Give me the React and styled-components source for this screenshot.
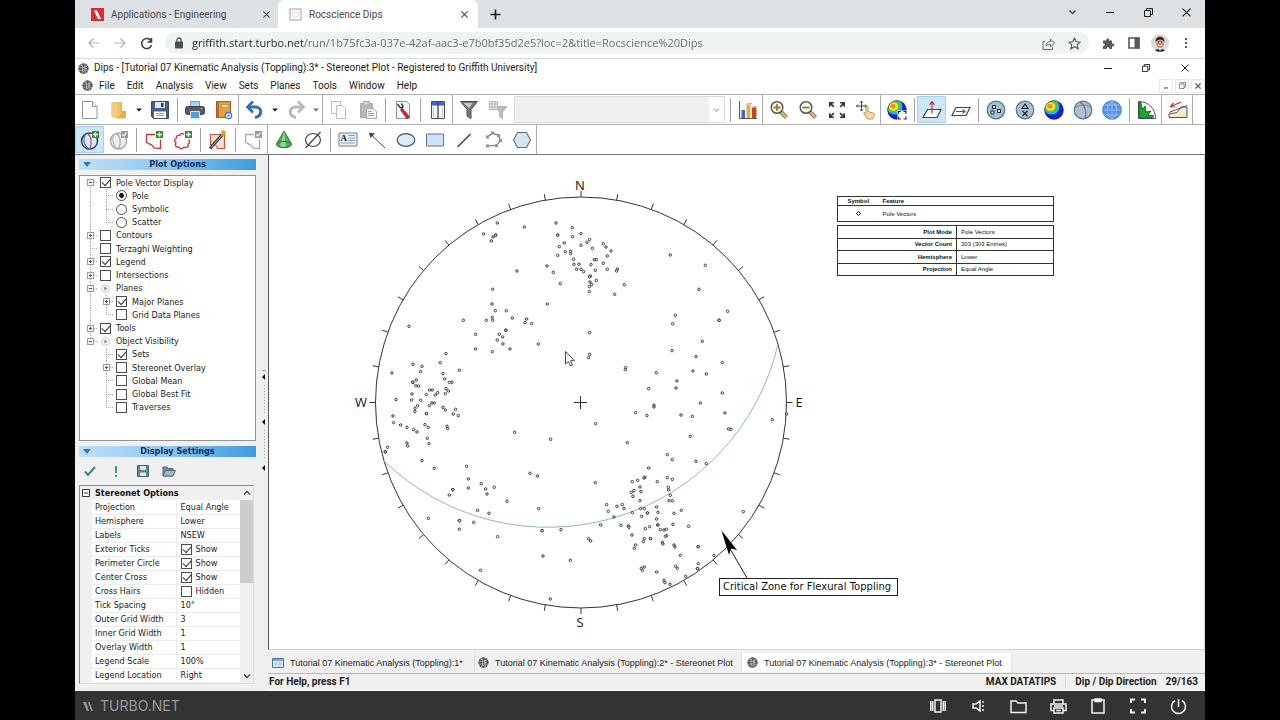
import React from "react";
import styled, { createGlobalStyle, css } from "styled-components";

const ui = 'Roboto, "Noto Sans", sans-serif';
const humanist = '"Open Sans", "Noto Sans", sans-serif';
const classic = '"DejaVu Sans Condensed", "DejaVu Sans", sans-serif';
const arial = '"Liberation Sans", Arial, sans-serif';

const GlobalStyle = createGlobalStyle`
  * { box-sizing: border-box; }
  html, body, #root { height: 100%; }
  body { margin: 0; background: #000; font-family: ${ui}; color: #1c1c1c; }
  button { border: 0; padding: 0; background: none; font: inherit; color: inherit; }
  svg { display: block; flex: none; }
`;

/* ---------- shell ---------- */

const Desktop = styled.div`
  min-height: 100vh;
  padding: 0 75px;
  background: #000;
  display: flex;
`;
const Screen = styled.div`
  flex: 1;
  min-width: 0;
  background: #fff;
  display: flex;
  flex-direction: column;
`;

/* ---------- browser ---------- */

const TabStrip = styled.div`
  height: 28px;
  background: #dde1e4;
  display: flex;
  align-items: stretch;
`;
const BrowserTab = styled.div`
  width: ${(p) => (p.$active ? 200 : 203)}px;
  padding: 0 8px 0 ${(p) => (p.$active ? 11 : 16)}px;
  display: flex;
  align-items: center;
  gap: 7px;
  border-radius: 6px 6px 0 0;
  background: ${(p) => (p.$active ? "#fff" : "transparent")};
  font-size: 10px;
  color: #45494d;
`;
const TabTitle = styled.span`
  flex: 1;
  white-space: nowrap;
`;
const GlyphButton = styled.button`
  width: ${(p) => p.$w || 14}px;
  height: ${(p) => p.$h || 20}px;
  display: flex;
  align-items: center;
  justify-content: center;
`;
const WindowControls = styled.div`
  margin-left: auto;
  padding-bottom: ${(p) => p.$lift || 0}px;
  display: flex;
  align-items: center;
`;
const AddressRow = styled.div`
  height: 31px;
  padding: 0 6px;
  border-bottom: 1px solid #d9dcdc;
  display: flex;
  align-items: center;
`;
const Omnibox = styled.label`
  flex: 1;
  height: 22px;
  margin: 0 6px;
  padding: 0 2px 0 9px;
  border-radius: 11px;
  background: #eff3f2;
  display: flex;
  align-items: center;
  gap: 8px;
`;
const UrlInput = styled.input`
  flex: 1;
  min-width: 0;
  border: 0;
  padding: 0;
  outline: 0;
  font-family: ${humanist};
  font-size: 11px;
  line-height: 20px;
  color: transparent;
  background: linear-gradient(to right, #202326 112px, #62676a 112px);
  background-clip: text;
  -webkit-background-clip: text;
`;
const Avatar = styled.button`
  width: 18px;
  height: 18px;
  margin: 0 4px;
  border-radius: 9px;
  overflow: hidden;
`;

/* ---------- application chrome ---------- */

const TitleBar = styled.header`
  height: 18px;
  padding-left: 3px;
  display: flex;
  align-items: center;
  gap: 5px;
`;
const AppTitle = styled.h1`
  margin: 0;
  font-size: 10px;
  line-height: 14px;
  font-weight: 400;
  white-space: nowrap;
`;
const MenuBar = styled.nav`
  height: 17px;
  padding-left: 7px;
  display: flex;
  align-items: center;
`;
const MenuItem = styled.button`
  padding: 0 6px;
  font-size: 10px;
  line-height: 16px;
`;
const MdiButton = styled.button`
  width: 14px;
  height: 14px;
  margin-left: 2px;
  border: 1px solid #e8e8e8;
  display: flex;
  align-items: center;
  justify-content: center;
  color: #666;
`;
const ToolRow = styled.div`
  height: 30px;
  border-top: 1px solid #b4b0b4;
  display: flex;
`;
const Band = styled.div`
  display: flex;
  align-items: center;
  & + & {
    padding-left: 1px;
    border-left: 1px solid #b0aab0;
  }
  &:last-child {
    border-right: 1px solid #b0aab0;
  }
`;
const ToolButton = styled.button`
  width: 29px;
  height: 27px;
  display: flex;
  align-items: center;
  justify-content: center;
  background: ${(p) => (p.$on ? "#cce6fb" : "none")};
  box-shadow: ${(p) => (p.$on ? "inset 0 0 0 1px #a6d2f5" : "none")};
`;
const CaretButton = styled.button`
  width: 12px;
  height: 27px;
  display: flex;
  align-items: center;
  justify-content: center;
  color: ${(p) => (p.$dim ? "#666" : "#111")};
`;
const Divider = styled.span`
  width: 6px;
  height: 24px;
  background: linear-gradient(#a5a0a5, #a5a0a5) 3px 0 / 1px 100% no-repeat;
`;
const ComboBox = styled.label`
  width: 211px;
  height: 27px;
  margin: 0 2px;
  border: 1px solid #dcdcdc;
  background: #f0f0f0;
  display: flex;
  align-items: center;
`;
const ComboSelect = styled.select`
  flex: 1;
  height: 25px;
  border: 0;
  appearance: none;
  background: none;
`;
const ComboArrow = styled.span`
  width: 15px;
  height: 25px;
  background: #fff;
  display: flex;
  align-items: center;
  justify-content: center;
`;

/* ---------- work area ---------- */

const WorkArea = styled.div`
  flex: 1;
  display: flex;
  border-top: 1px solid #77767a;
  background: #f0f0f0;
`;
const SideBar = styled.aside`
  width: 181px;
  padding: 4px 0 7px 4px;
  display: flex;
  flex-direction: column;
  font-family: ${classic};
  font-size: 9px;
`;
const PanelTitle = styled.h2`
  height: 11px;
  margin: 0;
  padding-left: 4px;
  background: linear-gradient(to right, #bfe0fa, #8cc6f3 50%, #3d9be0);
  display: flex;
  align-items: center;
  gap: 8px;
  font-size: 9px;
  line-height: 11px;
  color: #12305c;
  span {
    flex: 1;
    text-align: center;
  }
`;
const TreeBox = styled.div`
  height: 266px;
  margin: 5px 0;
  padding-left: 2px;
  border: 1px solid #92949a;
  background: #fff;
`;
const TreeList = styled.ul`
  height: 238px;
  margin: 0;
  padding: 0;
  list-style: none;
  display: grid;
  grid-auto-rows: 1fr;
`;
const TreeItem = styled.li`
  display: flex;
  align-items: stretch;
  label,
  > span:last-child {
    display: flex;
    align-items: center;
    white-space: nowrap;
  }
`;
const dots = "#a8a8a8 0 1px, transparent 1px 2px";
const verticals = { all: "0 / 1px 100%", top: "0 / 1px 50%", bottom: "100% / 1px 50%" };
const Guide = styled.span`
  width: 16px;
  display: flex;
  align-items: center;
  justify-content: center;
  background-repeat: no-repeat;
  ${(p) =>
    p.$v &&
    css`
      background: ${p.$stub ? `repeating-linear-gradient(to right, ${dots}) 8px 50% / 8px 1px no-repeat,` : ""}
        repeating-linear-gradient(to bottom, ${dots}) 8px ${verticals[p.$v]} no-repeat;
    `}
`;
const Expander = styled.button`
  width: 7px;
  height: 7px;
  border: 1px solid #989ca4;
  background: ${(p) =>
    p.$open
      ? "linear-gradient(#555, #555) 1px 2px / 3px 1px no-repeat, #f4f4f4"
      : "linear-gradient(#556, #556) 1px 2px / 3px 1px no-repeat, linear-gradient(#556, #556) 2px 1px / 1px 3px no-repeat, #f4f4f4"};
`;
const ControlCell = styled.span`
  width: 18px;
  display: flex;
  align-items: center;
  padding-left: ${(p) => (p.$bullet ? 3 : 2)}px;
`;
const CheckBox = styled.input`
  appearance: none;
  flex: none;
  width: 11px;
  height: 11px;
  margin: 0;
  border: 1px solid #4c4c4c;
  background: #fff;
  &:checked::after {
    content: "";
    display: block;
    width: 7px;
    height: 4px;
    margin: 1px;
    border: solid #333;
    border-width: 0 0 1px 1px;
    transform: rotate(-48deg);
  }
`;
const Radio = styled(CheckBox)`
  border-radius: 50%;
  &:checked::after {
    width: 5px;
    height: 5px;
    margin: 2px;
    border: 0;
    border-radius: 50%;
    background: #111;
  }
`;
const SettingsTools = styled.div`
  height: 28px;
  padding-left: 1px;
  display: flex;
  align-items: center;
  gap: 6px;
`;
const SettingsBox = styled.div`
  flex: 1;
  width: 175px;
  border: 1px solid #8c8c8c;
  border-right-color: #ddd;
  border-bottom-color: #ddd;
  display: flex;
  background: #f0f0f0;
`;
const SettingsGrid = styled.div`
  flex: 1;
`;
const SettingsHeading = styled.h3`
  height: 14px;
  margin: 0;
  padding-left: 2px;
  display: flex;
  align-items: center;
  gap: 5px;
  font-size: 9px;
  color: #111;
`;
const SettingsTable = styled.table`
  width: 148px;
  margin-left: 12px;
  border-collapse: collapse;
  table-layout: fixed;
  background: #fff;
  th,
  td {
    height: 14px;
    padding: 0 0 0 3px;
    border-bottom: 1px solid #ececec;
    text-align: left;
    font-weight: 400;
    line-height: 12px;
    white-space: nowrap;
  }
  th {
    width: 84px;
    border-right: 1px solid #ececec;
  }
  td {
    padding-left: 4px;
  }
  label {
    display: flex;
    align-items: center;
    gap: 4px;
  }
`;
const ScrollBar = styled.div`
  width: 13px;
  display: flex;
  flex-direction: column;
`;
const ScrollButton = styled.button`
  height: 14px;
  display: flex;
  align-items: center;
  justify-content: center;
`;
const ScrollThumb = styled.div`
  height: 83px;
  background: #cdcdcd;
`;
const Spring = styled.div`
  flex: 1;
`;
const Splitter = styled.div`
  width: 12px;
  padding: 215px 2px 0 6px;
  display: flex;
  flex-direction: column;
`;
const Grip = styled.div`
  height: ${(p) => p.$h}px;
  padding-top: 3px;
  border-top: ${(p) => (p.$edge ? "1px solid #999" : "0")};
  background: repeating-linear-gradient(#999 0 1px, transparent 1px 3px) 2px 14px / 1px 28px no-repeat;
`;
const DocumentArea = styled.main`
  flex: 1;
  min-width: 0;
  display: flex;
  flex-direction: column;
`;
const PlotCanvas = styled.section`
  flex: 1;
  padding-top: 1px;
  border-left: 1px solid #55555a;
  border-right: 1px solid #d0d0d0;
  border-bottom: 1px solid #d4d4d4;
  background: #fff;
  display: flex;
  align-items: flex-start;
`;
const PlotSvg = styled.svg`
  overflow: visible;
  font-family: ${humanist};
`;
const LegendColumn = styled.div`
  width: 217px;
  margin: 40px 0 0 8px;
  display: flex;
  flex-direction: column;
  gap: 3px;
`;
const LegendTable = styled.table`
  width: 100%;
  height: ${(p) => p.$h}px;
  border: 1px solid #333;
  border-collapse: collapse;
  table-layout: fixed;
  font-family: ${arial};
  font-size: 6px;
  line-height: 8px;
  color: #111;
  tr {
    border-bottom: 1px solid #333;
  }
  th,
  td {
    padding: 0 4px;
    text-align: left;
    white-space: nowrap;
  }
`;
const SymbolCell = styled.td`
  width: 41px;
  && {
    text-align: center;
  }
  svg {
    margin: 0 auto;
  }
`;
const KeyCell = styled.th`
  width: 119px;
  border-right: 1px solid #333;
  && {
    text-align: right;
  }
`;
const DocTabs = styled.div`
  height: 24px;
  padding-top: 3px;
  border-bottom: 1px solid #b8b8b8;
  display: flex;
`;
const DocTab = styled.button`
  height: 19px;
  width: ${(p) => p.$w}px;
  padding-left: ${(p) => p.$pad}px;
  border-right: 1px solid #dedede;
  background: ${(p) => (p.$active ? "#fff" : "transparent")};
  display: flex;
  align-items: center;
  gap: 6px;
  font-family: ${arial};
  font-size: 9px;
  white-space: nowrap;
`;
const StatusBar = styled.footer`
  height: 17px;
  padding: 0 7px 0 1px;
  border-bottom: 1px solid #fff;
  display: flex;
  align-items: center;
  gap: 9px;
  font-size: 10px;
  font-weight: 700;
  line-height: 14px;
  white-space: nowrap;
`;
const StatusRule = styled.i`
  width: 1px;
  height: 12px;
  background: #dcdcdc;
`;
const TaskBar = styled.div`
  height: 30px;
  padding: 0 7px;
  background: #333;
  display: flex;
  align-items: center;
  color: #9a9a9a;
`;
const Brand = styled.span`
  flex: 1;
  display: flex;
  align-items: center;
  gap: 6px;
  font-family: Inter, sans-serif;
  font-size: 14px;
  line-height: 20px;
`;
const TaskButton = styled.button`
  width: 40px;
  height: 30px;
  display: flex;
  align-items: center;
  justify-content: center;
  color: #f2f2f2;
`;

/* ---------- icons ---------- */

const Svg = ({ w = 20, h = w, vb, sw = 1, children, ...rest }) => (
  <svg width={w} height={h} viewBox={vb || `0 0 ${w} ${h}`} fill="none" stroke="currentColor" strokeWidth={sw} aria-hidden="true" {...rest}>
    {children}
  </svg>
);

const Close = ({ s = 7, sw = 1.2 }) => (
  <Svg w={s} vb="0 0 8 8" sw={sw}><path d="M.5.5l7 7M7.5.5l-7 7" /></Svg>
);
const Minimise = () => <Svg w={8} sw={1}><path d="M0 4.5h8" /></Svg>;
const Restore = ({ s = 9 }) => (
  <Svg w={s} vb="0 0 9 9"><path d="M.5 2.5h6v6h-6zM2.5 2.500v-2h6v6h-2" /></Svg>
);
const Caret = () => <Svg w={6} h={4}><path d="M.3.5h5.400L3 3.500z" fill="currentColor" stroke="none" /></Svg>;
const Chevron = ({ up, c = "#444", w = 8 }) => (
  <Svg w={w} h={6} vb="0 0 8 6" color={c} sw={1.3}><path d={up ? "M1 4.500l3-3 3 3" : "M1 1.500l3 3 3-3"} /></Svg>
);
const Globe = () => (
  <Svg w={11} vb="0 0 12 12">
    <circle cx="6" cy="6" r="5.600" fill="#4a4c4e" stroke="none" />
    <path d="M1 4.500l4 .5 5.500-2M1 8l4-.6 6 .6M4 1c1.500 3 1.500 7 0 10M8 1c-1 3-1 7 .5 10" stroke="#c9cccc" strokeWidth=".8" />
    <path d="M2.500 2l2 1M7 5.500l2.500.5M5 9l2 1" stroke="#eee" strokeWidth=".8" />
  </Svg>
);

const NewDoc = () => (
  <Svg w={20}><path d="M2.500 1.500h10l4.500 5V18.500H2.500z" fill="#fff" stroke="#8b97a3" /><path d="M12.500 1.500v5H17" stroke="#8b97a3" fill="#e8eef4" /></Svg>
);
const OpenDoc = () => (
  <Svg w={20}><path d="M8 2h5v9h3.500v7H7z" fill="#e3b14e" stroke="none" /><path d="M2.500 2H12v13l-4 3.500-5.500-2z" fill="#eec468" stroke="none" /><path d="M2.500 2L8 4.500v14l-5.500-2z" fill="#f1cd7d" stroke="none" /><path d="M12 11.500h4.500v6.500H8" stroke="#d9a84a" strokeWidth=".8" /></Svg>
);
const Save = () => (
  <Svg w={20}><path d="M1.500 1.500h17v17h-15l-2-2z" fill="#456187" stroke="#3a4a66" /><path d="M5 2h10v6H5z" fill="#dfe8f2" stroke="none" /><path d="M11 3h2.500v4H11z" fill="#2a3a55" stroke="none" /><path d="M4 11.500h12V18H4z" fill="#fff" stroke="none" /><path d="M6 13.500h8M6 15.500h8" stroke="#8d9bb0" /></Svg>
);
const Print = () => (
  <Svg w={20}><path d="M5.500 1.500h9V7h-9z" fill="#a9d4f2" stroke="#69a5d0" /><rect x=".5" y="6.500" width="19" height="8" rx="2" fill="#565b61" stroke="#3f4347" /><path d="M5.500 11.500h9v7h-9z" fill="#4fa0dc" stroke="#cfe6f7" /><circle cx="16.500" cy="8.800" r=".8" fill="#6f6" stroke="none" /></Svg>
);
const Book = () => (
  <Svg w={20}><path d="M2.500 1.500h14v16h-14z" fill="#e0a046" stroke="#9b6322" /><path d="M3 2h2v15H3z" fill="#b87426" stroke="none" /><path d="M7.500 4.500h7v3h-7z" fill="#f6dca8" stroke="#b87426" strokeWidth=".6" /><circle cx="14.500" cy="15.500" r="3.200" fill="#dde9fa" stroke="#3f70c0" strokeWidth="1.200" /><circle cx="14.500" cy="15.500" r="1" fill="#3f70c0" stroke="none" /></Svg>
);
const Undo = ({ c = "#2f6fb5", flip }) => (
  <Svg w={20}><g transform={flip ? "matrix(-1 0 0 1 20 0)" : undefined}><path d="M8 1.500L2.500 7 8 12.500" stroke={c} strokeWidth="2.600" /><path d="M3.500 7H11c6.500.5 6.500 9-1 10.500" stroke={c} strokeWidth="3" /></g></Svg>
);
const Copy = () => (
  <Svg w={20} color="#b9bcc0"><path d="M2.500 1.500h9v12h-9z" fill="#fff" /><path d="M7.500 5.500h6l3 3v10h-9z" fill="#fff" /></Svg>
);
const Paste = () => (
  <Svg w={20} color="#a9a9a9"><path d="M2.500 3.500h12v14h-12z" fill="#b9b9b9" /><path d="M5.500 1.500h6v3.500h-6z" fill="#d7d7d7" /><path d="M8.500 8.500h7l3 3v7h-10z" fill="#f1f1f1" /><path d="M10 11.500h4M10 13.500h6M10 15.500h6" /></Svg>
);
const DocPen = () => (
  <Svg w={20}><path d="M3.500 1.500h10l3 3v14h-13z" fill="#f5f9fc" stroke="#8799a8" /><path d="M9 8l7.500 8.500-2.500 2.500-6.500-9z" fill="#c22b2b" stroke="#8d1d1d" strokeWidth=".6" /><path d="M4.500 4l2.500 3.500 2 .5 1-1.500-1.500-3" stroke="#333" strokeWidth="1.400" /></Svg>
);
const Columns = () => (
  <Svg w={20}><path d="M3.500 1.500h13v17h-13z" fill="#f3f5f8" stroke="#4b4f58" /><path d="M4 2h12v3.500H4z" fill="#3c63cc" stroke="none" /><path d="M10 2v16.500" stroke="#4b4f58" strokeWidth="1.400" /><path d="M5.500 7v10M14.500 7v10" stroke="#c7ccd6" /></Svg>
);
const Filter = () => (
  <Svg w={20}><path d="M1.500 1.500h17l-6.500 8v9l-4-2.500V9.500z" fill="#777" stroke="#4c4c4c" /><path d="M4.500 3h9L10 8z" fill="#c8c8c8" stroke="none" /></Svg>
);
const FilterGrid = () => (
  <Svg w={20} color="#b4b4b4"><path d="M7 6.500h12l-4.500 5.500v6.500l-3-2V12z" fill="#bdbdbd" /><path d="M1.500 1.500h8v8h-8z" fill="#f2f2f2" /><path d="M4 1.500v8M7 1.500v8M1.500 4h8M1.500 7h8" /></Svg>
);
const BarChart = () => (
  <Svg w={20}><path d="M1.500 1v17.500H19" stroke="#555" /><path d="M3.500 10h3.500v8H3.500z" fill="#3d65c8" stroke="none" /><path d="M8.500 4.500h4v13.500h-4z" fill="#e9a94c" stroke="none" /><path d="M14 7.500h4V18h-4z" fill="#c8402c" stroke="none" /><path d="M8.500 4.500l1-1h4l-1 1M14 7.500l1-1h3.500v10" stroke="#a9863a" strokeWidth=".6" /></Svg>
);
const Magnifier = ({ plus }) => (
  <Svg w={20}><path d="M12 12l5.500 5.500" stroke="#8d7438" strokeWidth="4" /><path d="M12 12l5.500 5.500" stroke="#d9bd74" strokeWidth="2.200" /><circle cx="8" cy="7.500" r="5.800" fill="#f7f7f2" stroke="#565a60" strokeWidth="1.500" /><path d={plus ? "M4.500 7.500h7M8 4v7" : "M4.500 7.500h7"} stroke="#a07820" strokeWidth="1.800" /></Svg>
);
const Expand = () => (
  <Svg w={18} vb="0 0 20 20" color="#333" sw={1.8}><path d="M2 6.500V2h4.500M2.500 2.500l4 4M18 6.500V2h-4.500M17.500 2.500l-4 4M2 13.500V18h4.500M2.500 17.500l4-4M18 13.500V18h-4.500M17.500 17.500l-4-4" /></Svg>
);
const Pan = () => (
  <Svg w={20}><path d="M5.500 1v10M.5 6h10M4 2.500L5.500 1 7 2.500M4 9.500L5.500 11 7 9.500M2 4.500L.5 6 2 7.500M9 4.500L10.500 6 9 7.500" stroke="#444" /><path d="M10 7.500c0-1.500 2-1.500 2 0v4l5 1.500c1.500.5 1.500 2 1 3.500l-1.500 2.500h-5L8 14c-1-1.500.5-2 1.500-1l.5.5z" fill="#f6dba8" stroke="#a8803c" strokeWidth=".8" /></Svg>
);
const RainbowBall = ({ tool }) => (
  <Svg w={20}>
    <circle cx="10" cy="10" r="9.500" fill="#1420d8" stroke="none" />
    <path d="M2.500 4A9.500 9.500 0 0 1 14 1.500c3 5 1 12-5 13C5 15 2 13 .8 11 .3 8.500 1 6 2.500 4z" fill="#28b6d4" stroke="none" />
    <path d="M3.500 3A9.500 9.500 0 0 1 12.500 1c2 4.500.5 10-4.500 11-3 .5-6-.5-7.400-2.500A9 9 0 0 1 3.500 3z" fill="#59c838" stroke="none" />
    <ellipse cx="6.500" cy="6.500" rx="4.800" ry="4.300" fill="#f3ea2e" stroke="none" />
    <ellipse cx="6" cy="6.300" rx="2.500" ry="2.200" fill="#f08a24" stroke="none" />
    <circle cx="10" cy="10" r="9.300" stroke="#10186a" strokeWidth=".5" />
    {tool && <g><path d="M10.500 10.500h9.500v9.500h-9.500z" fill="#fff" stroke="none" /><path d="M11.500 14v-2.500h2.500M19 14v-2.500h-2.500M11.500 16.500V19h2.500M19 16.500V19h-2.500" stroke="#333" strokeWidth="1.200" /></g>}
  </Svg>
);
const PlaneUp = () => (
  <Svg w={20}><path d="M5.500 9.500h13.500l-4 8H1z" fill="#fff" stroke="#444" strokeWidth="1.200" /><path d="M10 13.500V2M7.500 5L10 1.500 12.500 5" stroke="#c03030" strokeWidth="1.200" /></Svg>
);
const PlaneFlat = () => (
  <Svg w={20}><path d="M5 7.500h14l-4 8H1z" fill="#fff" stroke="#444" strokeWidth="1.200" /><path d="M5 11.500h9M11.500 9.500l2.500 2-2.500 2" stroke="#c03030" strokeWidth="1.200" /></Svg>
);
const Disc = ({ children, fill = "#9fc3d2" }) => (
  <Svg w={20}><circle cx="10" cy="10" r="8.800" fill={fill} stroke="#5c7480" strokeWidth="1.200" />{children}</Svg>
);
const PolesDisc = () => <Disc><path d="M6.500 5.500h3v3h-3zM5 11h3v3H5zM11.500 9.500h3v3h-3z" fill="#dfeef4" stroke="#222" /></Disc>;
const SymbolDisc = () => <Disc><path d="M7 8.500L10 4l3 4.500zM7.500 11l5 5M12.500 11l-5 5" stroke="#222" strokeWidth="1.200" /></Disc>;
const PlaneDisc = () => <Disc fill="#a9c3d4"><path d="M7 2c5 3 7 10 5 16.500" stroke="#b65a6a" strokeWidth="1.200" /><path d="M2 8c5-4 12-4 16 0" stroke="#6d8796" /></Disc>;
const GridDisc = () => <Svg w={20}><circle cx="10" cy="10" r="9.300" fill="#5a8fe0" stroke="#3f6fc4" /><path d="M10 .5v19M.5 10h19M2.500 5h15M2.500 15h15M10 .5c-6 5-6 14 0 19M10 .5c6 5 6 14 0 19" stroke="#a9c8f5" strokeWidth=".8" /></Svg>;
const Rosette = () => (
  <Svg w={20}><path d="M1.500 1.500c10 0 17 7 17 17h-17z" fill="#fff" stroke="#555" /><path d="M2 18V2l2 .5 1.500 7L8 6l1 6 5-1-3 4 5.500.5-1 2.500z" fill="#1ba634" stroke="#0c5c1b" strokeWidth=".8" /></Svg>
);
const Slope = () => (
  <Svg w={20}><path d="M1 17.500V14l8-1.500 4-5.500h6v10.500z" fill="#fbe8c4" stroke="#555" /><path d="M1 12.500L19 5.500" stroke="#555" /><path d="M3 6.500L13 2M5.500 3L2.500 6.500l4.500.5" stroke="#c03030" strokeWidth="1.200" /></Svg>
);

const PlusBadge = () => <g><path d="M12 1h7v7h-7z" fill="#2f8f2a" stroke="none" /><path d="M15.500 2.200v4.600M13.200 4.500h4.600" stroke="#fff" strokeWidth="1.400" /></g>;
const CheckBadge = () => <g><path d="M12 1h7v7h-7z" fill="#9b9b9b" stroke="none" /><path d="M13.500 4.500l1.500 1.500 2.500-3.500" stroke="#fff" strokeWidth="1.200" /></g>;
const PlaneSphere = ({ dim }) => (
  <Svg w={20}><circle cx="9.500" cy="11" r="8" fill={dim ? "#eee" : "#dde9f8"} stroke={dim ? "#aaa" : "#333e55"} strokeWidth="1.500" /><path d="M7.500 3.500c4 3 5 10 2 15.500" stroke={dim ? "#aaa" : "#c05070"} strokeWidth="1.300" /><path d="M5.500 4c-3 5-2 11 3 15" stroke={dim ? "#bbb" : "#4467b0"} strokeWidth="1.200" />{dim ? <CheckBadge /> : <PlusBadge />}</Svg>
);
const WindowSet = ({ dim }) => (
  <Svg w={20}><path d="M11 4.500H2.500v8c2.500 1.500 6.500 2 7.500 5.500l6.500.5V9.500" stroke={dim ? "#aaa" : "#cf3038"} strokeWidth="1.300" />{dim ? <CheckBadge /> : <PlusBadge />}</Svg>
);
const FreeSet = () => (
  <Svg w={20}><path d="M11 4.500c-2-2-4-1-4 1-2-1-4 0-3.500 2.500C1 9 1 11.500 3 12.500c-1.500 3 0 5 3 4.500 1 2.500 4 2 5 0 3 1.500 5-.5 4-3 2-1 2-3 .5-4.500" stroke="#cf3038" strokeWidth="1.300" /><PlusBadge /></Svg>
);
const Wand = () => (
  <Svg w={20}><path d="M2.500 4.500h14v14h-7c0-3-3-4-7-4z" fill="#fbe3d4" stroke="#cf5038" strokeWidth="1.200" /><path d="M2 18.500L14 5" stroke="#333" strokeWidth="3" /><path d="M3 17.500L14 5" stroke="#bbb" strokeWidth="1" /><path d="M15.500 0v6M12.500 3h6M13.500 1l4 4M17.500 1l-4 4" stroke="#e0a020" strokeWidth="1.200" /></Svg>
);
const Cone = () => <Svg w={20}><path d="M10 1L2.500 14c1 4.500 14 4.500 15 0z" fill="#4db055" stroke="#2c7a35" /><path d="M10 1L6 16.500c3 1 4 .8 6 0z" fill="#8fd795" stroke="none" /><ellipse cx="10" cy="14.500" rx="7.500" ry="3" stroke="#2c7a35" /></Svg>;
const Slashed = () => <Svg w={20}><ellipse cx="10" cy="10" rx="7.500" ry="6.500" stroke="#444" strokeWidth="1.200" /><path d="M2.500 18L17.500 2" stroke="#444" strokeWidth="1.200" /></Svg>;
const TextTool = () => <Svg w={20}><path d="M1 3h18v13H1z" fill="#eaf1f8" stroke="#6f7f90" /><text x="2.500" y="11" fontFamily="Liberation Serif, serif" fontWeight="700" fontSize="9" fill="#111" stroke="none">A</text><path d="M10.500 5.500H17M10.500 8H17M10.500 10.500H17M3 13h14" stroke="#8fa0b4" /></Svg>;
const ArrowTool = () => <Svg w={20}><path d="M4 4.500L18 18" stroke="#445" strokeWidth="1" /><path d="M2 2.500l6 1L3.500 8z" fill="#234a80" stroke="none" /></Svg>;
const EllipseTool = () => <Svg w={20}><ellipse cx="10" cy="10" rx="8.800" ry="6.300" fill="#dceafa" stroke="#3c5478" strokeWidth="1.200" /></Svg>;
const RectTool = () => <Svg w={20}><path d="M1.500 4h17v12h-17z" fill="#cfe3f6" stroke="#5b7698" /></Svg>;
const LineTool = () => <Svg w={20}><path d="M3.500 17L16.500 4" stroke="#333" strokeWidth="1.200" /></Svg>;
const PolyLineTool = () => <Svg w={20}><path d="M4.500 7l5-4 6 2.500 2 5-4 5-9 .5" stroke="#667" strokeWidth="1.100" /><path d="M3 5.500h3v3H3zM8 1.500h3v3H8zM14 4h3v3h-3zM16 9h3v3h-3zM12 14h3v3h-3zM3 14.500h3v3H3z" fill="#7f9a9a" stroke="none" /></Svg>;
const HexTool = () => <Svg w={20}><path d="M5.500 2.500h9l4 7.500-4 7.500h-9L1.500 10z" fill="#d6e6ee" stroke="#5f7888" strokeWidth="1.200" /></Svg>;

/* ---------- tree ---------- */

const treeRows = [
  { t: "Pole Vector Display", d: 0, open: true, check: true, first: true },
  { t: "Pole", d: 1, radio: true, check: true },
  { t: "Symbolic", d: 1, radio: true },
  { t: "Scatter", d: 1, radio: true, last: true },
  { t: "Contours", d: 0, open: false },
  { t: "Terzaghi Weighting", d: 0 },
  { t: "Legend", d: 0, open: false, check: true },
  { t: "Intersections", d: 0, open: false },
  { t: "Planes", d: 0, open: true, bullet: true },
  { t: "Major Planes", d: 1, open: false, check: true },
  { t: "Grid Data Planes", d: 1, last: true },
  { t: "Tools", d: 0, open: false, check: true },
  { t: "Object Visibility", d: 0, open: true, bullet: true, end: true },
  { t: "Sets", d: 1, check: true, bare: true },
  { t: "Stereonet Overlay", d: 1, open: false, bare: true },
  { t: "Global Mean", d: 1, bare: true },
  { t: "Global Best Fit", d: 1, bare: true },
  { t: "Traverses", d: 1, last: true, bare: true },
];

function TreeRow({ row }) {
  const vertical = row.first ? "bottom" : row.last || row.end ? "top" : "all";
  const Box = row.radio ? Radio : CheckBox;
  return (
    <TreeItem>
      {row.d === 1 && <Guide $v={row.bare ? null : "all"} />}
      <Guide $v={vertical} $stub>
        {row.open !== undefined && <Expander $open={row.open} aria-label={`${row.open ? "Collapse" : "Expand"} ${row.t}`} />}
      </Guide>
      {row.bullet ? (
        <span>
          <ControlCell $bullet>
            <Svg w={9}><circle cx="4.500" cy="4.500" r="4" fill="#f2f2f2" stroke="#d0d0d0" /><path d="M3.500 2.500l2.500 2-2.500 2z" fill="#777" stroke="none" /></Svg>
          </ControlCell>
          {row.t}
        </span>
      ) : (
        <label>
          <ControlCell>
            <Box type={row.radio ? "radio" : "checkbox"} name={row.radio ? "pole-display" : undefined} defaultChecked={!!row.check} />
          </ControlCell>
          {row.t}
        </label>
      )}
    </TreeItem>
  );
}

const settings = [
  ["Projection", "Equal Angle"],
  ["Hemisphere", "Lower"],
  ["Labels", "NSEW"],
  ["Exterior Ticks", "Show", true],
  ["Perimeter Circle", "Show", true],
  ["Center Cross", "Show", true],
  ["Cross Hairs", "Hidden", false],
  ["Tick Spacing", "10°"],
  ["Outer Grid Width", "3"],
  ["Inner Grid Width", "1"],
  ["Overlay Width", "1"],
  ["Legend Scale", "100%"],
  ["Legend Location", "Right"],
];

/* ---------- stereonet ---------- */

// Poles are stored per quadrant, in thirds of a pixel from the quadrant's origin.
const poles = [
  { ox: 101, oy: 24, pts: "381,128 462,140 557,128 606,142 340,161 368,170 376,164 376,165 363,182 562,164 562,165 607,169 632,160 582,188 567,199 632,195 585,214 601,213 601,220 562,225 610,237 611,252 626,252 619,267 632,267 640,274 530,257 549,276 440,272 570,310 367,327 365,371 531,371 375,391 408,391 366,411 367,420 348,420 279,420 426,413 469,416 464,427 484,430 116,438 406,450 407,450 387,462 397,470 316,462 381,479 398,491 316,506 366,514 419,506 504,491 227,520 210,547 128,552 155,558 151,574 65,578 267,570 218,580 223,596 138,599 127,606 128,606 136,616 145,617 237,606 245,606 178,629 186,629 227,625 234,632 225,640 202,637 195,644 125,641 168,643" },
  { ox: 306, oy: 24, pts: "43,178 35,186 51,204 84,190 92,200 107,212 96,227 57,238 63,238 84,249 47,253 60,270 96,267 126,266 124,272 45,287 43,290 63,300 44,305 49,313 42,319 42,334 147,313 118,342 285,224 390,255 371,327 300,405 292,430 457,393 431,420 432,420 381,483 290,511 362,529 441,547 43,457 43,522 40,532 151,562 150,568 243,577 353,572 393,581 305,602 302,623 220,625 441,638" },
  { ox: 81, oy: 234, pts: "137,28 184,29 211,30 252,38 245,38 237,46 202,46 194,54 194,64 228,70 229,70 128,77 130,97 151,104 170,111 190,118 200,125 224,103 234,111 278,51 285,59 316,57 309,71 324,76 290,108 292,115 231,144 236,160 170,158 172,167 112,171 105,184 105,185 215,211 252,234 349,228 354,266 354,293 393,280 432,291 406,296 410,311 307,298 308,298 297,314 470,333 382,360 416,369 370,396 327,391 328,391 327,417 234,384 442,439 565,355 539,249 561,257 601,147 493,126 575,421 576,421 632,418 578,497 660,510 391,540 600,626" },
  { ox: 306, oy: 234, pts: "375,38 236,45 236,50 181,67 215,76 317,74 351,78 449,68 634,71 591,88 460,116 467,117 61,100 345,138 156,157 276,193 291,208 362,213 393,220 220,233 60,277 209,261 206,263 171,274 187,270 246,274 276,262 291,267 194,290 176,301 168,306 197,304 173,318 279,291 280,299 285,315 281,331 291,331 194,331 94,343 99,363 125,348 141,343 146,355 116,380 171,367 196,355 207,355 216,368 217,368 199,378 244,350 248,366 244,386 247,404 248,404 318,360 296,369 293,402 340,408 137,405 159,407 161,411 76,404 40,445 46,452 210,415 223,409 255,418 266,419 273,417 170,434 207,445 225,445 226,445 204,454 274,436 270,438 261,456 263,461 181,464 177,474 296,464 299,470 368,469 369,469 315,495 416,495 369,520 366,535 367,535 207,530 198,534 201,540 301,528 306,534 244,545 331,558 266,570 269,577 284,582 504,364" },
];
const CX = 312;
const CY = 246.5;
const R = 205.5;

function Stereonet() {
  const ticks = Array.from({ length: 36 }, (_, i) => (i * Math.PI) / 18);
  return (
    <PlotSvg width="560" height="493" viewBox="0 0 560 493" role="img" aria-label="Stereonet plot">
      <g fill="none" stroke="#333" strokeWidth="1">
        <circle cx={CX} cy={CY} r={R} />
        {ticks.map((a) => (
          <line key={a} x1={CX + R * Math.sin(a)} y1={CY - R * Math.cos(a)} x2={CX + (R + 6) * Math.sin(a)} y2={CY - (R + 6) * Math.cos(a)} />
        ))}
        <path d="M305 246.500h13M311.500 240v13" />
      </g>
      <path d="M509 188A236 236 0 0 1 115 305" fill="none" stroke="#8dbcae" strokeWidth="1" />
      <g fill="#fff" fillOpacity=".6" stroke="#2c2c2c" strokeWidth=".9">
        {poles.map((q) =>
          q.pts.split(" ").map((p, i) => {
            const [x, y] = p.split(",").map(Number);
            return <circle key={`${q.ox}-${i}`} cx={q.ox + x / 3 + 0.3} cy={q.oy + y / 3 + 0.3} r="1.250" />;
          })
        )}
      </g>
      <g fontSize="13" fill="#111" textAnchor="middle">
        <text x="311" y="34">N</text>
        <text x="311" y="471">S</text>
        <text x="530" y="251">E</text>
        <text x="92" y="251">W</text>
      </g>
      <path d="M460 391L478 422" stroke="#222" />
      <path d="M452.500 374.500L468 394l-6-1.500L460 399l-3-9.500z" fill="#000" />
      <rect x="450.500" y="422.500" width="178" height="17" fill="#fff" stroke="#222" />
      <text x="454" y="434" fontFamily="DejaVu Sans" fontSize="10" fill="#111">Critical Zone for Flexural Toppling</text>
      <path d="M296.500 195.500v12.500l3-2.500 2 4.500 2-1-2-4.300h4z" fill="#fff" stroke="#333" strokeWidth=".9" />
    </PlotSvg>
  );
}

const Tool = ({ name, on, children }) => (
  <ToolButton $on={on} aria-label={name}>{children}</ToolButton>
);

export default function App() {
  return (
    <Desktop>
      <GlobalStyle />
      <Screen>
        <TabStrip>
          <BrowserTab>
            <Svg w={13}><path d="M0 0h13v13H0z" fill="#d5303a" stroke="none" /><path d="M3 2.500h3l4 8.500H7z" fill="#fff" stroke="none" /></Svg>
            <TabTitle>Applications - Engineering</TabTitle>
            <GlyphButton $w={8} aria-label="Close tab"><Close /></GlyphButton>
          </BrowserTab>
          <BrowserTab $active>
            <Svg w={13}><path d="M1 1h11v11H1z" fill="#fff" stroke="#cbbdb8" strokeWidth="1.600" /><path d="M3.500 4h6v5h-6z" stroke="#ecdcd6" /></Svg>
            <TabTitle>Rocscience Dips</TabTitle>
            <GlyphButton $w={12} aria-label="Close tab"><Close /></GlyphButton>
          </BrowserTab>
          <GlyphButton $w={34} $h={28} aria-label="New tab"><Svg w={11} sw={1.6}><path d="M5.500.5v10M.5 5.500h10" /></Svg></GlyphButton>
          <WindowControls $lift={4}>
            <GlyphButton $w={38} aria-label="Search tabs"><Chevron w={9} /></GlyphButton>
            <GlyphButton $w={38} aria-label="Minimise browser"><Minimise /></GlyphButton>
            <GlyphButton $w={38} aria-label="Restore browser"><Restore /></GlyphButton>
            <GlyphButton $w={38} aria-label="Close browser"><Close s={9} sw={1} /></GlyphButton>
          </WindowControls>
        </TabStrip>
        <AddressRow>
          <GlyphButton $w={26} aria-label="Back"><Svg w={12} color="#b0b4b8" sw={1.2}><path d="M11.500 6H1M5.500 1.500L1 6l4.500 4.500" /></Svg></GlyphButton>
          <GlyphButton $w={26} aria-label="Forward"><Svg w={12} color="#b0b4b8" sw={1.2}><path d="M.5 6H11M6.500 1.500L11 6l-4.500 4.500" /></Svg></GlyphButton>
          <GlyphButton $w={26} aria-label="Reload"><Svg w={13} color="#3c4043" sw={1.5}><path d="M11 4A5 5 0 1 0 11.500 8M11.500 1v4h-4" /></Svg></GlyphButton>
          <Omnibox aria-label="Address">
            <Svg w={10} h={12} color="#4c5054"><path d="M1.500 5h7v6h-7z" fill="currentColor" /><path d="M3 5V3a2 2 0 0 1 4 0v2" strokeWidth="1.300" /></Svg>
            <UrlInput defaultValue="griffith.start.turbo.net/run/1b75fc3a-037e-42af-aac3-e7b0bf35d2e5?loc=2&title=Rocscience%20Dips" />
            <WindowControls>
              <GlyphButton $w={26} aria-label="Share"><Svg w={13} color="#666"><path d="M3 4.500H1v8h9.500V10M4 9c0-3 2-4.500 4.500-4.500V2l4 4-4 4V7.500C6.500 7.500 5 8 4 9z" /></Svg></GlyphButton>
              <GlyphButton $w={26} aria-label="Bookmark"><Svg w={13} color="#555" sw={1.1}><path d="M6.500 1l1.700 3.700 4 .4-3 2.700.9 4-3.600-2.100L2.900 11.800l.9-4-3-2.700 4-.4z" /></Svg></GlyphButton>
            </WindowControls>
          </Omnibox>
          <GlyphButton $w={26} aria-label="Extensions"><Svg w={13} color="#55595d"><path d="M1 3.500h3.500c-.8-3 3.300-3 2.500 0h3v3c3-.8 3 3.500 0 2.700V12H7.200c.5-2.700-3-2.700-2.500 0H1V9c2.500.5 2.500-3 0-2.500z" fill="currentColor" stroke="none" /></Svg></GlyphButton>
          <GlyphButton $w={26} aria-label="Side panel"><Svg w={12} color="#55595d"><path d="M1 1h10v10H1z" strokeWidth="1.600" /><path d="M7 1h4v10H7z" fill="currentColor" /></Svg></GlyphButton>
          <Avatar aria-label="Profile">
            <Svg w={18}><path d="M0 0h18v18H0z" fill="#d8dadb" stroke="none" /><path d="M3 18c0-4 12-4 12 0z" fill="#223" stroke="none" /><path d="M7.500 13h3L9 18z" fill="#fff" stroke="none" /><ellipse cx="9" cy="8.500" rx="4" ry="5.500" fill="#c9957a" stroke="none" /><path d="M4.500 8C4 1 14 1 13.500 8 12.500 4.500 6 4.500 4.500 8z" fill="#33241e" stroke="none" /><path d="M7 8h1M10 8h1" stroke="#543" /><path d="M7 11c1 1 3 1 4 0" stroke="#eee" strokeWidth=".8" /></Svg>
          </Avatar>
          <GlyphButton $w={26} aria-label="Browser menu"><Svg w={4} h={12}><path d="M1 1h2v2H1zM1 5h2v2H1zM1 9h2v2H1z" fill="#55595d" stroke="none" /></Svg></GlyphButton>
        </AddressRow>

        <TitleBar>
          <Globe />
          <AppTitle>Dips - [Tutorial 07 Kinematic Analysis (Toppling):3* - Stereonet Plot - Registered to Griffith University]</AppTitle>
          <WindowControls>
            <GlyphButton $w={38} $h={16} aria-label="Minimise"><Minimise /></GlyphButton>
            <GlyphButton $w={38} $h={16} aria-label="Restore"><Restore s={8} /></GlyphButton>
            <GlyphButton $w={40} $h={16} aria-label="Close"><Close s={8} sw={1} /></GlyphButton>
          </WindowControls>
        </TitleBar>
        <MenuBar>
          <Globe />
          {["File", "Edit", "Analysis", "View", "Sets", "Planes", "Tools", "Window", "Help"].map((m) => (
            <MenuItem key={m}>{m}</MenuItem>
          ))}
          <WindowControls>
            <MdiButton aria-label="Minimise document"><Svg w={6}><path d="M1 5h4" strokeWidth="1.300" /></Svg></MdiButton>
            <MdiButton aria-label="Restore document"><Restore s={7} /></MdiButton>
            <MdiButton aria-label="Close document"><Close s={6} sw={1.8} /></MdiButton>
          </WindowControls>
        </MenuBar>

        <ToolRow>
          <Band>
            <Tool name="New"><NewDoc /></Tool>
            <Tool name="Open"><OpenDoc /></Tool>
            <CaretButton aria-label="Recent files"><Caret /></CaretButton>
            <Tool name="Save"><Save /></Tool>
            <Divider />
            <Tool name="Print"><Print /></Tool>
            <Tool name="Report"><Book /></Tool>
          </Band>
          <Band>
            <Tool name="Undo"><Undo /></Tool>
            <CaretButton aria-label="Undo list"><Caret /></CaretButton>
            <Tool name="Redo"><Undo flip c="#b9b9b9" /></Tool>
            <CaretButton $dim aria-label="Redo list"><Caret /></CaretButton>
          </Band>
          <Band>
            <Tool name="Copy"><Copy /></Tool>
            <Tool name="Paste"><Paste /></Tool>
            <Divider />
            <Tool name="Project settings"><DocPen /></Tool>
            <Divider />
            <Tool name="Columns"><Columns /></Tool>
          </Band>
          <Band>
            <Tool name="Filter"><Filter /></Tool>
            <Tool name="Filter grid"><FilterGrid /></Tool>
            <ComboBox aria-label="Active filter">
              <ComboSelect disabled />
              <ComboArrow><Chevron c="#aaa" w={7} /></ComboArrow>
            </ComboBox>
            <Divider />
            <Tool name="Chart"><BarChart /></Tool>
          </Band>
          <Band>
            <Tool name="Zoom in"><Magnifier plus /></Tool>
            <Tool name="Zoom out"><Magnifier /></Tool>
            <Tool name="Zoom all"><Expand /></Tool>
            <Tool name="Pan"><Pan /></Tool>
          </Band>
          <Band>
            <Tool name="Contour preset"><RainbowBall tool /></Tool>
            <Divider />
            <Tool name="Pole vectors" on><PlaneUp /></Tool>
            <Tool name="Dip vectors"><PlaneFlat /></Tool>
            <Divider />
            <Tool name="Pole plot"><PolesDisc /></Tool>
            <Tool name="Symbolic plot"><SymbolDisc /></Tool>
            <Tool name="Contour plot"><RainbowBall /></Tool>
            <Tool name="Major planes plot"><PlaneDisc /></Tool>
            <Tool name="Stereonet overlay"><GridDisc /></Tool>
            <Divider />
            <Tool name="Rosette plot"><Rosette /></Tool>
          </Band>
          <Band>
            <Tool name="Kinematic analysis"><Slope /></Tool>
          </Band>
        </ToolRow>
        <ToolRow>
          <Band>
            <Tool name="Add plane" on><PlaneSphere /></Tool>
            <Tool name="Edit planes"><PlaneSphere dim /></Tool>
            <Divider />
            <Tool name="Add set window"><WindowSet /></Tool>
            <Tool name="Add freehand set"><FreeSet /></Tool>
            <Divider />
            <Tool name="Set wizard"><Wand /></Tool>
            <Divider />
            <Tool name="Edit sets"><WindowSet dim /></Tool>
          </Band>
          <Band>
            <Tool name="Add cone"><Cone /></Tool>
            <Tool name="Pitch"><Slashed /></Tool>
            <Divider />
            <Tool name="Text box"><TextTool /></Tool>
            <Tool name="Arrow"><ArrowTool /></Tool>
            <Tool name="Ellipse"><EllipseTool /></Tool>
            <Tool name="Rectangle"><RectTool /></Tool>
            <Tool name="Line"><LineTool /></Tool>
            <Tool name="Polyline"><PolyLineTool /></Tool>
            <Tool name="Polygon"><HexTool /></Tool>
          </Band>
        </ToolRow>

        <WorkArea>
          <SideBar>
            <PanelTitle><Svg w={8} h={5}><path d="M0 0h8L4 5z" fill="#2f78b4" stroke="none" /></Svg><span>Plot Options</span></PanelTitle>
            <TreeBox>
              <TreeList>{treeRows.map((r) => <TreeRow key={r.t} row={r} />)}</TreeList>
            </TreeBox>
            <PanelTitle><Svg w={8} h={5}><path d="M0 0h8L4 5z" fill="#2f78b4" stroke="none" /></Svg><span>Display Settings</span></PanelTitle>
            <SettingsTools>
              <GlyphButton $w={20} aria-label="Apply"><Svg w={12} color="#3f8285" sw={2}><path d="M1 6.500L4 10l7-8" /></Svg></GlyphButton>
              <GlyphButton $w={20} aria-label="Apply now"><Svg w={4} h={11} color="#3c9aa0" sw={2}><path d="M2 0v7M2 9v2" /></Svg></GlyphButton>
              <GlyphButton $w={21} aria-label="Save settings"><Svg w={12}><path d="M.5.5h11v11H.5z" fill="#5f8590" stroke="#47656e" /><path d="M3 1h6v4H3zM3 7.500h6V11H3z" fill="#dde9ec" stroke="none" /></Svg></GlyphButton>
              <GlyphButton $w={20} aria-label="Open settings"><Svg w={14} h={11}><path d="M1 1h4l1 1.500h5V10H1z" fill="#6f9098" stroke="#4e6c75" /><path d="M3.500 4.500h10L11 10H1z" fill="#9dbcc4" stroke="#4e6c75" /></Svg></GlyphButton>
            </SettingsTools>
            <SettingsBox>
              <SettingsGrid>
                <SettingsHeading>
                  <Svg w={8}><path d="M.5.5h7v7h-7zM2 4h4" stroke="#333" fill="#fff" /></Svg>
                  Stereonet Options
                </SettingsHeading>
                <SettingsTable>
                  <tbody>
                    {settings.map(([name, value, checked]) => (
                      <tr key={name}>
                        <th scope="row">{name}</th>
                        <td>
                          {checked === undefined ? value : (
                            <label><CheckBox type="checkbox" defaultChecked={checked} />{value}</label>
                          )}
                        </td>
                      </tr>
                    ))}
                  </tbody>
                </SettingsTable>
              </SettingsGrid>
              <ScrollBar>
                <ScrollButton aria-label="Scroll up"><Chevron up /></ScrollButton>
                <ScrollThumb />
                <Spring />
                <ScrollButton aria-label="Scroll down"><Chevron /></ScrollButton>
              </ScrollBar>
            </SettingsBox>
          </SideBar>
          <Splitter>
            <Grip $h={46} $edge><Svg w={3} h={6}><path d="M3 0v6L0 3z" fill="#111" stroke="none" /></Svg></Grip>
            <Grip $h={46}><Svg w={3} h={6}><path d="M3 0v6L0 3z" fill="#111" stroke="none" /></Svg></Grip>
            <Svg w={3} h={12}><path d="M3 3v6L0 6z" fill="#111" stroke="none" /></Svg>
          </Splitter>
          <DocumentArea>
            <PlotCanvas>
              <Stereonet />
              <LegendColumn>
                <LegendTable $h={26}>
                  <thead>
                    <tr><SymbolCell as="th">Symbol</SymbolCell><th>Feature</th></tr>
                  </thead>
                  <tbody>
                    <tr>
                      <SymbolCell><Svg w={5}><path d="M2.500.5l2 2-2 2-2-2z" /></Svg></SymbolCell>
                      <td>Pole Vectors</td>
                    </tr>
                  </tbody>
                </LegendTable>
                <LegendTable $h={51}>
                  <tbody>
                    <tr><KeyCell scope="row">Plot Mode</KeyCell><td>Pole Vectors</td></tr>
                    <tr><KeyCell scope="row">Vector Count</KeyCell><td>303 (303 Entries)</td></tr>
                    <tr><KeyCell scope="row">Hemisphere</KeyCell><td>Lower</td></tr>
                    <tr><KeyCell scope="row">Projection</KeyCell><td>Equal Angle</td></tr>
                  </tbody>
                </LegendTable>
              </LegendColumn>
            </PlotCanvas>
            <DocTabs>
              <DocTab $w={207} $pad={4}>
                <Svg w={12}><path d="M.5 1.500h11v9H.5z" fill="#fff" stroke="#4a74b8" /><path d="M1 2h10v2H1z" fill="#7fa4da" stroke="none" /><path d="M4 2v8M8 2v8M1 6h10M1 8h10" stroke="#9bb5dc" strokeWidth=".8" /></Svg>
                Tutorial 07 Kinematic Analysis (Toppling):1*
              </DocTab>
              <DocTab $w={267} $pad={3}><Globe />Tutorial 07 Kinematic Analysis (Toppling):2* - Stereonet Plot</DocTab>
              <DocTab $w={270} $pad={5} $active><Globe />Tutorial 07 Kinematic Analysis (Toppling):3* - Stereonet Plot</DocTab>
            </DocTabs>
            <StatusBar>
              <span>For Help, press F1</span>
              <Spring />
              <span>MAX DATATIPS</span>
              <StatusRule />
              <span>Dip / Dip Direction</span>
              <span>29/163</span>
            </StatusBar>
          </DocumentArea>
        </WorkArea>

        <TaskBar>
          <Brand>
            <Svg w={12} h={11}><path d="M1 1h3l3 9H5z" fill="#9a9a9a" stroke="none" /><path d="M6 1h1.500l3.500 9H9z" fill="#9a9a9a" stroke="none" /></Svg>
            TURBO.NET
          </Brand>
          <TaskButton aria-label="Windows"><Svg w={16} sw={1.5}><path d="M5 2h6v12H5zM2.700 3v10M.8 3v10M13.300 3v10M15.200 3v10" /></Svg></TaskButton>
          <TaskButton aria-label="Sound"><Svg w={14} sw={1.5}><path d="M2 5h3l4-3v10L5 9H2zM12 2v2M12 6v2M12 10v2" /></Svg></TaskButton>
          <TaskButton aria-label="Files"><Svg w={17} h={15} sw={1.5}><path d="M1 2h5l2 2h8v9.500H1z" /></Svg></TaskButton>
          <TaskButton aria-label="Printer"><Svg w={17} h={15} sw={1.5}><path d="M4 5V1h9v4M4 11.500H1V5h15v6.500h-3M4 9h9v5H4zM4 7h9M6 11.500h5" /></Svg></TaskButton>
          <TaskButton aria-label="Clipboard"><Svg w={14} h={16} sw={1.5}><path d="M1 2h12v13H1z" /><path d="M4 1h6v2.500H4z" fill="currentColor" /></Svg></TaskButton>
          <TaskButton aria-label="Full screen"><Svg w={16} sw={2}><path d="M1 5V1.500h4M11 1.500h4V5M15 11v3.500h-4M5 14.500H1V11" /></Svg></TaskButton>
          <TaskButton aria-label="Power"><Svg w={17} sw={1.5}><path d="M8.500 1v8M5 2.500a7 7 0 1 0 7 0" /></Svg></TaskButton>
        </TaskBar>
      </Screen>
    </Desktop>
  );
}
